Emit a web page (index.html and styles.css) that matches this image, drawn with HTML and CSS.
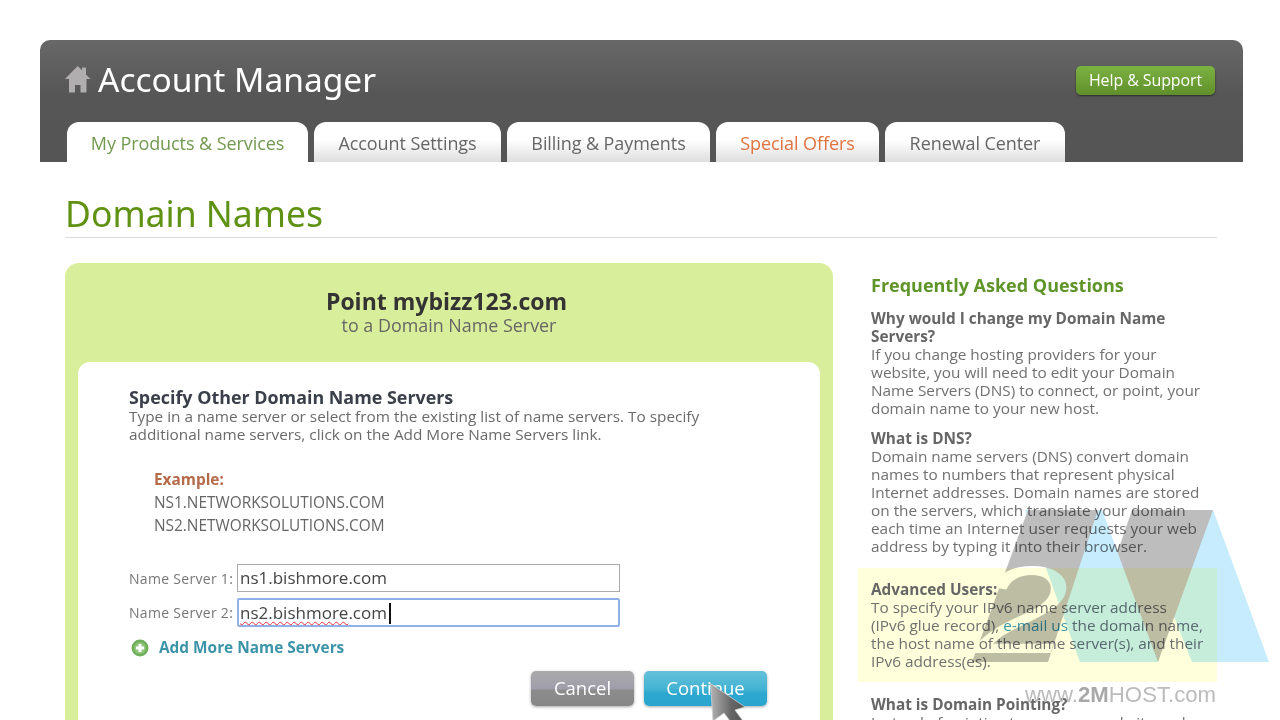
FILE: index.html
```html
<!DOCTYPE html>
<html lang="en">
<head>
<meta charset="utf-8">
<title>Domain Names</title>
<link rel="stylesheet" href="styles.css">
</head>
<body>
<div class="page">
  <header class="top">
    <div class="top-row">
      <div class="brand">
        <svg class="home" viewBox="0 0 26 27"><path d="M12.7 0 L17 4.2 V1.5 H21 V8.5 L25.5 13 H21.5 V26.5 H15.5 V19 H10 V26.5 H4 V13 H0 Z"/></svg>
        <span>Account Manager</span>
      </div>
      <a class="help">Help &amp; Support</a>
    </div>
    <nav class="tabs">
      <a class="tab tab-active t1">My Products &amp; Services</a>
      <a class="tab t2">Account Settings</a>
      <a class="tab t3">Billing &amp; Payments</a>
      <a class="tab tab-offer t4">Special Offers</a>
      <a class="tab t5">Renewal Center</a>
    </nav>
  </header>
  <main class="content">
    <h1 class="title">Domain Names</h1>
    <div class="columns">
      <section class="panel">
        <div class="panel-head">
          <h2>Point mybizz123.com</h2>
          <p>to a Domain Name Server</p>
        </div>
        <div class="card">
          <h3>Specify Other Domain Name Servers</h3>
          <p class="intro">Type in a name server or select from the existing list of name servers. To specify<br>additional name servers, click on the Add More Name Servers link.</p>
          <div class="example">
            <strong>Example:</strong>
            <div>NS1.NETWORKSOLUTIONS.COM</div>
            <div>NS2.NETWORKSOLUTIONS.COM</div>
          </div>
          <div class="field">
            <label>Name Server 1:</label>
            <div class="input">ns1.bishmore.com</div>
          </div>
          <div class="field">
            <label>Name Server 2:</label>
            <div class="input input-focus"><span class="squiggle">ns2.bishmore</span>.com<span class="caret"></span></div>
          </div>
          <a class="add">
            <svg viewBox="0 0 18 18"><circle cx="9" cy="9" r="8.5" fill="#6fae5a"/><circle cx="9" cy="9" r="6" fill="#8cc47a"/><path d="M9 5v8M5 9h8" stroke="#fff" stroke-width="3"/></svg>
            Add More Name Servers
          </a>
          <div class="actions">
            <a class="btn btn-cancel">Cancel</a>
            <a class="btn btn-go">Continue</a>
          </div>
        </div>
      </section>
      <aside class="faq">
        <h2>Frequently Asked Questions</h2>
        <div class="qa">
          <h4>Why would I change my Domain Name<br>Servers?</h4>
          <p>If you change hosting providers for your<br>website, you will need to edit your Domain<br>Name Servers (DNS) to connect, or point, your<br>domain name to your new host.</p>
        </div>
        <div class="qa qa-dns">
          <h4>What is DNS?</h4>
          <p>Domain name servers (DNS) convert domain<br>names to numbers that represent physical<br>Internet addresses. Domain names are stored<br>on the servers, which translate your domain<br>each time an Internet user requests your web<br>address by typing it into their browser.</p>
        </div>
        <div class="qa qa-note">
          <h4>Advanced Users:</h4>
          <p>To specify your IPv6 name server address<br>(IPv6 glue record), <a>e-mail us</a> the domain name,<br>the host name of the name server(s), and their<br>IPv6 address(es).</p>
        </div>
        <div class="qa">
          <h4>What is Domain Pointing?</h4>
          <p>Instead of pointing to your own website and</p>
        </div>
      </aside>
    </div>
  </main>
  <svg class="cursor" viewBox="0 0 40 40">
    <defs><linearGradient id="arrow" x1="0" y1="0" x2="1" y2="0"><stop offset="0" stop-color="#b4b4b4"/><stop offset="0.6" stop-color="#666"/><stop offset="1" stop-color="#555"/></linearGradient></defs>
    <path d="M0.5 0.5 L35 24 L25 27 L33 38 H20 L14 30 L3 38 Z" fill="url(#arrow)" stroke="#cfcfcf" stroke-width="0.8"/>
  </svg>
  <div class="mark">
    <svg class="mark-logo" viewBox="0 0 300 155">
      <defs>
        <mask id="cut">
          <rect width="300" height="155" fill="#fff"/>
          <text class="two" x="0" y="0" transform="translate(5 145) scale(1.35 1)">2</text>
        </mask>
      </defs>
      <polygon points="162,2 243,2 299,154 222,154" fill="#c6ecfd"/>
      <polygon points="162,2 243,2 188,154 110,154" fill="#bdbdbd"/>
      <polygon points="55,2 132,2 188,154 110,154" fill="#c6ecfd"/>
      <polygon points="58,2 128,2 78,154 2,154" fill="#bdbdbd" mask="url(#cut)"/>
    </svg>
    <div class="mark-text">www.<b>2M</b>HOST.com</div>
  </div>
</div>
</body>
</html>
```
FILE: styles.css
```css
* { box-sizing: border-box; }
html, body { margin: 0; padding: 0; background: #fff; }
body { font-family: "Open Sans", "Liberation Sans", sans-serif; color: #666; }
h1, h2, h3, h4, p { margin: 0; font-weight: normal; }

.page { position: relative; width: 1280px; height: 720px; overflow: hidden; padding-top: 40px; filter: blur(0.45px); }

.top {
  margin-left: 40px; width: 1203px; height: 122px;
  border-radius: 10px 10px 0 0;
  background: linear-gradient(#686868, #565656 45%, #555);
  display: flex; flex-direction: column; justify-content: space-between;
}
.top-row { display: flex; justify-content: space-between; align-items: flex-start; padding: 20px 28px 0 25px; }
.brand { display: flex; align-items: center; gap: 7px; color: #fff; font-family: "Noto Sans", sans-serif; font-size: 33.5px; line-height: 38px; }
.home { width: 26px; height: 27px; fill: #b0aeae; }
.help {
  margin-top: 6px; width: 139px; height: 29px; border-radius: 5px;
  background: linear-gradient(#7cb143, #6ea136 50%, #5f8f2b);
  box-shadow: 0 1px 2px rgba(0,0,0,.5);
  color: #fff; text-align: center; font-size: 16px; line-height: 29px; letter-spacing: -.1px;
}
.tabs { display: flex; gap: 6px; padding-left: 27px; }
.tab {
  height: 40px; border-radius: 12px 12px 0 0;
  background: linear-gradient(#fff 45%, #dedede);
  color: #666; text-align: center; font-size: 18px; line-height: 43px; letter-spacing: -.08px;
}
.t1 { width: 241px; } .t2 { width: 187px; } .t3 { width: 203px; } .t4 { width: 163px; } .t5 { width: 180px; }
.tab-active { background: #fff; color: #72994f; }
.tab-offer { color: #e0733f; }

.content { padding: 0 63px 0 65px; }
.title { color: #5f9113; font-family: "Noto Sans", sans-serif; font-size: 35.5px; line-height: 50px; padding-top: 26px; border-bottom: 1px solid #dcdcdc; box-sizing: content-box; height: 49px; }
.columns { display: flex; margin-top: 25px; }
.panel { width: 768px; flex: none; background: #d9ee9a; border-radius: 14px 14px 0 0; padding: 0 13px; height: 500px; }
.panel-head { height: 99px; padding-top: 23px; text-align: center; }
.panel-head h2 { color: #333; font-size: 23px; font-weight: 700; line-height: 30px; padding-right: 5px; }
.panel-head p { color: #666; font-size: 17.9px; line-height: 18px; }
.card { background: #fff; border-radius: 12px 12px 0 0; height: 400px; padding: 25px 50px 25px 51px; }
.card h3 { color: #3a3f4a; font-size: 17.9px; font-weight: 700; line-height: 20px; }
.intro { color: #6a6a6a; font-size: 15.35px; line-height: 18px; }
.example { margin: 25px 0 27px 25px; color: #666; font-size: 15.4px; line-height: 23px; }
.example strong { display: block; color: #b56a4a; font-size: 15.4px; }
.field { display: flex; align-items: center; margin-bottom: 6px; height: 28px; }
.field label { width: 108px; flex: none; color: #777; font-size: 14px; letter-spacing: .3px; white-space: nowrap; }
.input { width: 383px; height: 28px; border: 1px solid #aaa; color: #444; font-size: 17px; line-height: 26px; padding-left: 2px; white-space: nowrap; }
.input-focus { height: 29px; border: 2px solid #8fb0e8; border-radius: 2px; line-height: 25px; padding-left: 1px; }
.squiggle { text-decoration: underline wavy #e33 1px; text-underline-offset: 2px; }
.caret { display: inline-block; width: 2px; height: 21px; margin-left: 2px; background: #111; vertical-align: -5px; }
.add { display: flex; align-items: center; gap: 10px; margin: 12px 0 0 2px; color: #3c94a9; font-size: 15.4px; font-weight: 700; line-height: 19px; }
.add svg { width: 18px; height: 18px; flex: none; }
.actions { display: flex; justify-content: flex-end; gap: 10px; margin-top: 14px; padding-right: 3px; }
.btn { height: 35px; border-radius: 5px; color: #fff; text-align: center; font-size: 18.5px; line-height: 34px; box-shadow: 0 1px 3px rgba(0,0,0,.35); }
.btn-cancel { width: 103px; background: linear-gradient(#aaa, #a09eaa 50%, #8c8c8c 55%, #878787); }
.btn-go { width: 123px; background: linear-gradient(#65c0da, #45b4d3 50%, #2ca7cf 65%, #2aa5cd); }

.faq { margin-left: 38px; width: 350px; flex: none; color: #707070; font-size: 15.35px; line-height: 18px; padding-top: 10px; }
.faq h2 { color: #5f9428; font-size: 18px; font-weight: 700; line-height: 24px; margin-bottom: 12px; }
.faq h4 { color: #666; font-weight: 700; font-size: 15.35px; }
.qa { margin-bottom: 12px; white-space: nowrap; }
.qa-dns { margin-bottom: 13px; }
.qa-note { background: #ffffdc; margin: 0 -1px 13px -13px; padding: 12px 13px 12px; width: 359px; }
.qa-note a { color: #3c94a9; }

.cursor { position: absolute; left: 710px; top: 683px; width: 40px; height: 40px; }
.mark { position: absolute; left: 970px; top: 508px; width: 305px; }
.mark-logo { display: block; width: 300px; height: 155px; mix-blend-mode: multiply; }
.two { font-family: "Liberation Sans", sans-serif; font-size: 125px; font-style: italic; fill: #000; }
.mark-text { position: absolute; left: 55px; top: 175px; color: #bbb; font-family: "Liberation Sans", sans-serif; font-size: 22.2px; line-height: 24px; white-space: nowrap; }
.mark-text b { color: #a8a8a8; }
```
